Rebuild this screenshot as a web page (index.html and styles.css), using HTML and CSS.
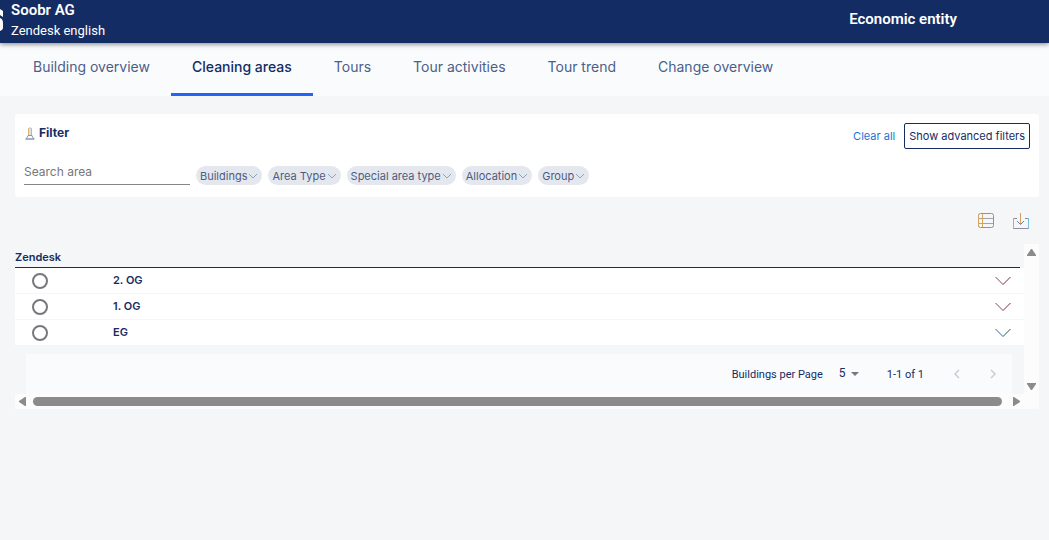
FILE: index.html
```html
<!DOCTYPE html>
<html lang="en">
<head>
<meta charset="UTF-8">
<meta name="viewport" content="width=device-width, initial-scale=1.0">
<title>Cleaning areas</title>
<link rel="stylesheet" href="styles.css">
</head>
<body>
  <header class="topbar">
    <svg class="logo" width="4" height="24" viewBox="0 0 4 24" aria-hidden="true">
      <path d="M0 0 L3 2 V8 L0 6 Z M0 9 Q3 10 3 14 V19 Q3 21 0 22 Z" fill="#fff"/>
    </svg>
    <div class="company">
      <div class="company-name">Soobr AG</div>
      <div class="company-sub">Zendesk english</div>
    </div>
    <div class="entity">Economic entity</div>
  </header>

  <nav class="tabs">
    <a href="#">Building overview</a>
    <a href="#" class="active">Cleaning areas</a>
    <a href="#">Tours</a>
    <a href="#">Tour activities</a>
    <a href="#">Tour trend</a>
    <a href="#">Change overview</a>
  </nav>

  <main class="content">
    <section class="filter-card">
      <div class="filter-head">
        <svg width="10" height="13" viewBox="0 0 10 13" fill="none" aria-hidden="true">
          <path d="M3.5 8V1.5Q5 0 6.5 1.5V8" stroke="#e0b078"/>
          <path d="M5 1V8" stroke="#a9c9dc"/>
          <path d="M3.5 8L1.5 11.5M6.5 8L8.5 11.5M3 8.5H7" stroke="#8a97a8"/>
          <path d="M.5 12H9.5" stroke="#49679c"/>
        </svg>
        <h2>Filter</h2>
        <a href="#" class="clear">Clear all</a>
        <button class="advanced">Show advanced filters</button>
      </div>
      <div class="filter-row">
        <input type="text" class="search" placeholder="Search area" aria-label="Search area">
        <button class="chip">Buildings <svg class="chip-arrow" viewBox="0 0 10 6"><path d="M1 1L5 5L9 1"/></svg></button>
        <button class="chip">Area Type <svg class="chip-arrow" viewBox="0 0 10 6"><path d="M1 1L5 5L9 1"/></svg></button>
        <button class="chip">Special area type <svg class="chip-arrow" viewBox="0 0 10 6"><path d="M1 1L5 5L9 1"/></svg></button>
        <button class="chip">Allocation <svg class="chip-arrow" viewBox="0 0 10 6"><path d="M1 1L5 5L9 1"/></svg></button>
        <button class="chip">Group <svg class="chip-arrow" viewBox="0 0 10 6"><path d="M1 1L5 5L9 1"/></svg></button>
      </div>
    </section>

    <div class="tools">
      <button class="icon-button" aria-label="Table view">
        <svg width="16" height="16" viewBox="0 0 16 16" fill="none">
          <path d="M1 5.5H15M1 10.5H15" stroke="#a3a3ad"/>
          <rect x="0.5" y="0.5" width="15" height="14" rx="2" stroke="#a08f80"/>
          <path d="M.5 2V13M4.5 1V14" stroke="#d9a75c"/>
        </svg>
      </button>
      <button class="icon-button" aria-label="Download">
        <svg width="16" height="16" viewBox="0 0 16 16" fill="none">
          <path d="M4 5.5H.5V15.5H15.5V5.5H12" stroke="#8b8fa0"/>
          <path d="M.5 5V15" stroke="#e2a35d"/>
          <path d="M15.5 5V15" stroke="#75bfe2"/>
          <path d="M7.5 0V11" stroke="#d0a066"/>
          <path d="M4 8L7.5 11.5L11 8" stroke="#737b96"/>
        </svg>
      </button>
    </div>

    <section class="list">
      <div class="list-body">
        <h3>Zendesk</h3>
        <label class="floor">
          <input type="radio" name="floor">
          <span>2. OG</span>
          <svg class="expand" viewBox="0 0 16 10"><path d="M.5 1L8 8.5" stroke="#8f3f68"/><path d="M8 8.5L15.5 1" stroke="#7c2540"/></svg>
        </label>
        <label class="floor">
          <input type="radio" name="floor">
          <span>1. OG</span>
          <svg class="expand" viewBox="0 0 16 10"><path d="M.5 1L8 8.5" stroke="#8f3f68"/><path d="M8 8.5L15.5 1" stroke="#7c2540"/></svg>
        </label>
        <label class="floor">
          <input type="radio" name="floor">
          <span>EG</span>
          <svg class="expand" viewBox="0 0 16 10"><path d="M.5 1L8 8.5" stroke="#286a9a"/><path d="M8 8.5L15.5 1" stroke="#1d5c66"/></svg>
        </label>
        <div class="paginator">
          <label for="pageSize">Buildings per Page</label>
          <div class="page-size">
            <select id="pageSize">
              <option>5</option>
              <option>10</option>
              <option>20</option>
            </select>
            <svg width="8" height="4" viewBox="0 0 8 4"><path d="M0 0H8L4 4Z" fill="#747780"/></svg>
          </div>
          <span class="range">1-1 of 1</span>
          <button class="icon-button" aria-label="Previous page" disabled>
            <svg width="8" height="10" viewBox="0 0 8 10" fill="none"><path d="M6 1L2 5L6 9" stroke="#c7c9ce" stroke-width="1.4"/></svg>
          </button>
          <button class="icon-button" aria-label="Next page" disabled>
            <svg width="8" height="10" viewBox="0 0 8 10" fill="none"><path d="M2 1L6 5L2 9" stroke="#c7c9ce" stroke-width="1.4"/></svg>
          </button>
        </div>
      </div>
      <div class="scroll-y">
        <svg width="9" height="8" viewBox="0 0 9 8"><path d="M4 0H5L9 6V7H0V6Z"/></svg>
        <svg width="9" height="8" viewBox="0 0 9 8"><path d="M0 0H9V1L5 7H4L0 1Z"/></svg>
      </div>
      <div class="scroll-x">
        <svg width="8" height="9" viewBox="0 0 8 9"><path d="M0 4L6 0H7V9H6L0 5Z"/></svg>
        <div class="thumb"></div>
        <svg width="8" height="9" viewBox="0 0 8 9"><path d="M0 0H1L7 4V5L1 9H0Z"/></svg>
      </div>
    </section>
  </main>
</body>
</html>
```

FILE: styles.css
```css
* {
  box-sizing: border-box;
}

body {
  margin: 0;
  min-height: 100vh;
  background-color: #f5f6f8;
  color: #142c64;
  font-family: Inter, sans-serif;
  font-size: 11px;
}

button,
input,
select {
  font-family: inherit;
  font-size: inherit;
  color: inherit;
}

a {
  text-decoration: none;
}

.topbar {
  position: relative;
  display: flex;
  align-items: center;
  height: 43px;
  padding-bottom: 2px;
  background-color: #142c64;
  color: #fff;
  box-shadow: 0 1px 5px rgba(0, 0, 0, 0.5);
  font-family: Roboto, sans-serif;
}

.logo {
  margin-right: 7px;
}

.company-name {
  font-size: 15px;
  line-height: 20px;
  font-weight: 600;
}

.company-sub {
  font-size: 13px;
  line-height: 22px;
  font-weight: 400;
}

.entity {
  margin-left: auto;
  margin-right: 92px;
  padding-bottom: 4px;
  font-size: 15px;
  font-weight: 600;
}

.tabs {
  display: flex;
  height: 53px;
  padding-left: 12px;
  background-color: #fafbfd;
}

.tabs a {
  padding: 14px 21px 0;
  border-bottom: 3px solid transparent;
  color: #4c5f88;
  font-size: 14px;
  line-height: 20px;
}

.tabs .active {
  border-color: #2264f5;
  color: #142c64;
  font-weight: 500;
}

.content {
  padding: 18px 10px 0 15px;
}

.filter-card {
  padding: 9px 9px 12px;
  background-color: #fff;
  border-radius: 3px;
}

.filter-head {
  display: flex;
  align-items: center;
  height: 26px;
}

.filter-head svg {
  margin: 0 4px 6px 1px;
}

.filter-head h2 {
  margin: 0 auto 7px 0;
  font-size: 12px;
  font-weight: 700;
}

.clear {
  margin-right: 9px;
  color: #2074d4;
}

.advanced {
  height: 26px;
  padding: 0 4px;
  background-color: #fff;
  border: 1px solid #142c64;
  border-radius: 2px;
}

.filter-row {
  display: flex;
  align-items: flex-end;
  gap: 6px;
  margin-top: 10px;
}

.search {
  width: 166px;
  height: 26px;
  padding: 0;
  background: none;
  border: none;
  border-bottom: 1px solid #85868a;
  font-size: 12px;
}

.search::placeholder {
  color: #777;
  opacity: 1;
}

.chip {
  display: flex;
  align-items: center;
  gap: 1px;
  height: 19px;
  padding: 0 4px;
  background-color: #e4e8ee;
  border: none;
  border-radius: 10px;
  color: #4c5b83;
}

.chip-arrow {
  width: 10px;
  height: 6px;
  fill: none;
  stroke: #86a6bb;
}

.tools {
  display: flex;
  justify-content: flex-end;
  gap: 19px;
  padding: 16px 10px 15px 0;
}

.icon-button {
  display: flex;
  padding: 0;
  background: none;
  border: none;
}

.list {
  display: grid;
  grid-template-columns: 1fr 15px;
  grid-template-rows: auto 15px;
}

.list h3 {
  margin: 0 4px 0 0;
  padding-top: 4px;
  border-bottom: 1px solid #142c64;
  font-size: 11px;
  line-height: 19px;
  font-weight: 600;
}

.floor {
  display: flex;
  align-items: center;
  height: 26px;
  padding: 0 13px 0 17px;
  background-color: #fff;
  border-bottom: 1px solid #f5f6f8;
  font-size: 11px;
  font-weight: 600;
}

.floor input {
  appearance: none;
  width: 16px;
  height: 16px;
  margin: 0 65px 0 0;
  border: 2px solid #78777d;
  border-radius: 50%;
}

.floor span {
  padding-bottom: 2px;
}

.expand {
  width: 16px;
  height: 10px;
  margin-left: auto;
  fill: none;
}

.paginator {
  display: flex;
  align-items: center;
  height: 40px;
  margin: 8px 12px 0 11px;
  padding-right: 15px;
  background-color: #fafbfd;
  font-family: Roboto, sans-serif;
}

.paginator label {
  margin-left: auto;
}

.page-size {
  display: flex;
  align-items: center;
  margin: 0 28px 0 16px;
}

.page-size select {
  appearance: none;
  width: 12px;
  padding: 0 0 2px;
  background: none;
  border: none;
  font-size: 12px;
}

.range {
  margin-right: 29px;
}

.paginator .icon-button + .icon-button {
  margin-left: 28px;
}

.scroll-y,
.scroll-x {
  display: flex;
  align-items: center;
  justify-content: space-between;
  background-color: #fcfcfc;
  fill: #8b8b8b;
}

.scroll-y {
  flex-direction: column;
  padding: 5px 0 3px;
}

.scroll-x {
  grid-column: 1 / 3;
  padding: 0 18px 0 4px;
}

.thumb {
  flex: 1;
  height: 9px;
  margin: 0 11px 0 6px;
  background-color: #8b8b8b;
  border-radius: 5px;
}
```
